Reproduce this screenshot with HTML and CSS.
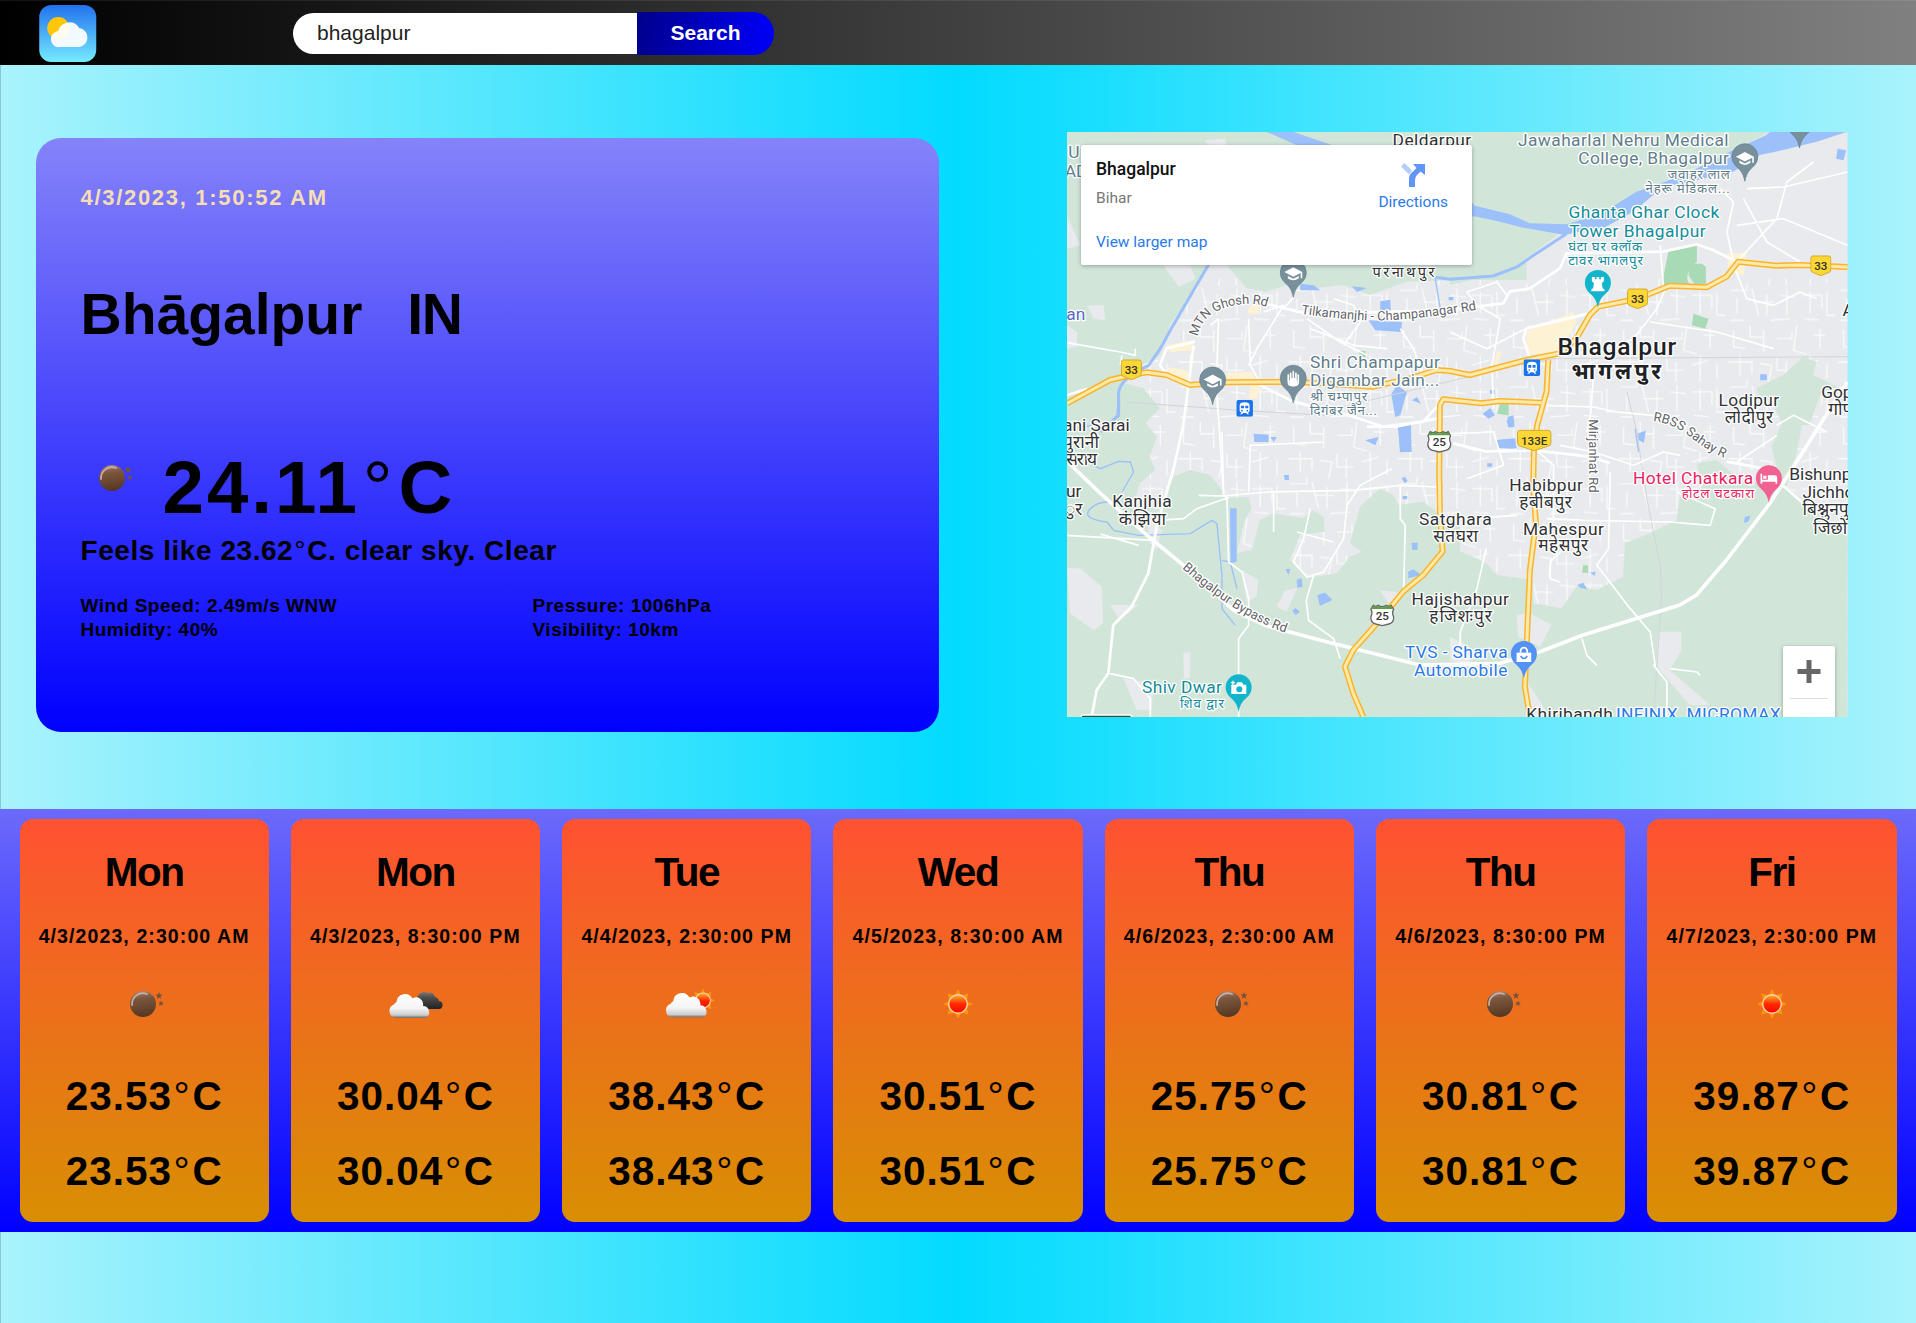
FILE: index.html
```html
<!DOCTYPE html>
<html lang="en">
<head>
<meta charset="utf-8">
<title>Weather</title>
<link rel="stylesheet" href="styles.css">
</head>
<body>
<svg class="defs" aria-hidden="true">
  <defs>
    <linearGradient id="sky" x1="0" y1="0" x2="0" y2="1"><stop offset="0" stop-color="#2172ee"/><stop offset="1" stop-color="#76ebff"/></linearGradient>
    <linearGradient id="moonFill" x1=".25" y1="0" x2=".4" y2="1"><stop offset="0" stop-color="#a98a78"/><stop offset=".3" stop-color="#7d573f"/><stop offset="1" stop-color="#553721"/></linearGradient>
    <linearGradient id="cloudFill" x1="0" y1="0" x2="0" y2="1"><stop offset="0" stop-color="#fff"/><stop offset=".6" stop-color="#f4f4f4"/><stop offset=".88" stop-color="#ccc"/><stop offset="1" stop-color="#666"/></linearGradient>
    <linearGradient id="darkFill" x1="0" y1="0" x2="0" y2="1"><stop offset="0" stop-color="#777"/><stop offset=".35" stop-color="#4a4a4a"/><stop offset="1" stop-color="#222"/></linearGradient>
    <linearGradient id="sunFill" x1="0" y1="0" x2="0" y2="1"><stop offset="0" stop-color="#ffb52e"/><stop offset=".5" stop-color="#ff2a00"/><stop offset="1" stop-color="#f00"/></linearGradient>
    <symbol id="moon" viewBox="-30 -30 60 60">
      <circle cx="-1" cy="0" r="13" fill="url(#moonFill)"/>
      <path d="M-12 1A11 11 0 0 1 3-10" fill="none" stroke="#d6bcae" stroke-width="1.8" stroke-linecap="round" opacity=".85"/>
      <path d="M15-12l1 2.400 2.500.2-1.900 1.700.6 2.500-2.200-1.300-2.200 1.300.6-2.500-1.900-1.700 2.500-.2zM17-3.500l.8 1.900 2 .2-1.500 1.300.5 2-1.800-1.100-1.800 1.100.5-2-1.500-1.300 2-.2z" fill="#75523c"/>
    </symbol>
    <symbol id="sun" viewBox="-30 -30 60 60">
      <path d="M0-15l3 6.500 7.600-2.100-2.100 7.600L15 0l-6.500 3 2.100 7.600L3 8.500 0 15l-3-6.500-7.600 2.100 2.100-7.600L-15 0l6.500-3-2.100-7.600L-3-8.500z" fill="#ff960c"/>
      <circle r="9.300" fill="url(#sunFill)" stroke="#ffd2a0" stroke-width="1.400"/>
    </symbol>
    <symbol id="cloud" viewBox="0 0 44 25"><path d="M7 25a7 7 0 0 1-1.500-13.500A6 6 0 0 1 8 9a8.500 8.500 0 0 1 16-3.500A7 7 0 0 1 34.500 13 6.300 6.300 0 0 1 37 25z" fill="url(#cloudFill)"/></symbol>
    <symbol id="clouds" viewBox="-30 -30 60 60">
      <path d="M2 5V-4A7.500 7.500 0 0 1 13-11a5 5 0 0 1 7 4 5 5 0 0 1 4 4 4 4 0 0 1-1 8z" fill="url(#darkFill)"/>
      <use href="#cloud" x="-26.500" y="-11" width="44" height="25"/>
    </symbol>
    <symbol id="partly" viewBox="-30 -30 60 60">
      <use href="#sun" x="-8" y="-27.500" width="48" height="48"/>
      <use href="#cloud" x="-22" y="-12" width="45" height="25.500"/>
    </symbol>
    <symbol id="pin" viewBox="-40 -40 80 116" overflow="visible"><path d="M0 74C-5 48-14 40-29 26A39 39 0 1 1 29 26C14 40 5 48 0 74z"/></symbol>
    <symbol id="cap" viewBox="-30 -25 60 50"><path d="M-28-4L0-19 28-4v19h-5V-1L0 11zM-17 8L0 17 17 8v8Q0 27-17 16z" fill="#fff"/></symbol>
    <symbol id="train" viewBox="-25 -25 50 50"><rect x="-25" y="-25" width="50" height="50" rx="6" fill="#1a73e8"/><path d="M-15-8q0-10 15-10t15 10V7q0 5-6 6l5 5H8L4 14H-4L-8 18h-6l5-5q-6-1-6-6zM-11-8V0H-2V-8zM2-8V0h9V-8z" fill="#fff" fill-rule="evenodd"/><circle cx="-8" cy="7" r="2.500" fill="#1a73e8"/><circle cx="8" cy="7" r="2.500" fill="#1a73e8"/></symbol>
    <symbol id="nh33" viewBox="-32 -32 64 64"><path d="M-24-29H24Q30-29 30-22V12Q30 19 22 21L0 30-22 21Q-30 19-30 12V-22Q-30-29-24-29z" fill="#fdd835" stroke="#d6a92c" stroke-width="3"/><text class="shield" y="12">33</text></symbol>
    <symbol id="nh25" viewBox="-38 -34 76 68"><path d="M-27-30Q-18-24-12-30 0-22 12-30 18-24 27-30L34-18Q28-8 34 4 36 22 20 26L0 31-20 26Q-36 22-34 4-28-8-34-18z" fill="#fff" stroke="#666" stroke-width="4"/><path d="M-27-28Q-18-22-12-28 0-20 12-28 18-22 27-28l5 9H-32z" fill="#5c9f42"/><text class="shield" y="13">25</text></symbol>
    <pattern id="streets" width="330" height="290" patternUnits="userSpaceOnUse">
      <path d="M20 15v50l35 4M70 0v35h40M110 15v65M150 40h45v-20M210 0l-10 75 40 12M260 30h35M280 10v60M5 110h70v35M40 90v60M100 115l35 5-10 50M150 95v40h50M178 110v60M225 120l50-15M250 90v80M300 115v45M10 185h50v-20M30 210v45M75 180l20 80M80 220h60M120 195v65M160 200l45 5M180 180v80M225 200h60v40M250 190v65M300 190v70h25M10 275h40M130 275l60-5M230 270l45 4" fill="none" stroke="#fff" stroke-width="4"/>
    </pattern>
    <path id="ghosh" d="M392 614Q405 548 475 527T595 523"/>
    <path id="tilka" d="M702 545Q760 555 880 564T1260 528"/>
    <path id="bypassLabel" d="M345 1309Q510 1455 665 1505"/>
    <path id="sahay" d="M1758 867Q1820 874 1870 915T1980 981"/>
  </defs>
</svg>

<header class="nav">
  <svg class="logo" viewBox="0 0 57 57" role="img" aria-label="Weather">
    <rect width="57" height="57" rx="12" fill="url(#sky)"/>
    <circle cx="19" cy="23" r="11" fill="#ffc60a"/>
    <path d="M21 42a8 8 0 0 1-6.500-14A10 10 0 0 1 19 26a11.500 11.500 0 0 1 21-3 9.600 9.600 0 0 1 0 19z" fill="#fff" opacity=".93"/>
  </svg>
  <form class="search">
    <input class="search-input" type="text" value="bhagalpur" aria-label="City">
    <button class="search-button" type="button">Search</button>
  </form>
</header>

<main class="overview">
  <section class="current">
    <p class="current-date">4/3/2023, 1:50:52 AM</p>
    <h1 class="place"><span class="city">Bhāgalpur</span><span class="country">IN</span></h1>
    <div class="current-temp"><svg class="icon"><use href="#moon"/></svg><span>24.11<span class="deg">°</span>C</span></div>
    <p class="feels">Feels like 23.62<span class="deg">°</span>C. clear sky. Clear</p>
    <div class="details">
      <div>Wind Speed: 2.49m/s WNW</div><div class="tight">Pressure: 1006hPa</div>
      <div class="tight">Humidity: 40%</div><div class="tight">Visibility: 10km</div>
    </div>
  </section>

  <section class="map">
    <svg class="map-canvas" viewBox="0 0 2342 1755" preserveAspectRatio="none">
      <rect width="2342" height="1755" fill="#e8eaed"/>
      <rect y="440" width="2342" height="1315" fill="url(#streets)" opacity=".75"/>
      <g class="green">
        <g transform="translate(-21 -21)">
          <path d="M21 21H1400V465H1200L1040 470 930 510 850 480 760 490 680 480 620 500 560 490 500 420H445L400 500 330 600 300 690 250 720 190 780 21 880z"/>
          <path d="M21 840L180 770 250 790 300 850 250 900H21z"/>
        </g>
        <g transform="translate(1149 -21)">
          <path d="M0 21H960L850 75 640 170 450 268 350 310 200 420 130 450 0 480z"/>
          <path d="M920 790L1000 750 1060 695 1100 710 1090 750 1193 800V830L1110 810 1080 900H1000L970 840 925 805z"/>
        </g>
        <g transform="translate(-21 864)">
          <path d="M21 0H250L290 50 270 110 285 150 240 190 220 250 300 270 340 170 390 150 450 165 490 215 500 235 565 230 575 265 555 300 530 400 575 390 600 300 640 280 730 295 760 270 790 290 795 335 720 345 690 420 740 475 830 460 870 410 905 395 870 370 900 260 960 205 1000 225 1015 255 1090 245 1130 275 1200 300V900H21z"/>
        </g>
        <g transform="translate(1149 864)">
          <path d="M0 380L110 430 140 465 250 480 250 550 335 565 380 500 440 510 520 470 525 370 600 340 680 300 690 230 760 200 740 130 800 120 860 170 900 200 980 140 965 80 1000 0H1060L1040 100 1010 200 1080 260 1193 350V900H0z"/>
        </g>
      </g>
      <g class="urban">
        <path d="M289 400H370L385 440 335 465zM415 25L475 20 480 40 420 38zM0 250L40 340 0 350zM60 520L110 520 115 565 80 560zM0 580L30 600 30 645 0 650z"/>
        <g transform="translate(-21 864)"><path d="M21 445H60L125 500 130 610 100 630 30 580zM150 555H235L180 600zM545 450L595 480 590 530 560 545zM650 560L675 510 712 505 680 575zM370 700L390 695V775H372zM190 775L280 790 275 870 230 870zM960 510L1030 520 1000 570zM260 290L305 330 290 390 270 370z"/></g>
        <g transform="translate(1149 864)"><path d="M200 585L240 580 305 615 270 680 205 650zM625 635H695V690L660 750 780 855H720L620 740zM235 790L300 891H240zM0 650L60 680V740L0 720z"/></g>
      </g>
      <g class="commercial"><path d="M1379 599L1519 539 1529 569 1479 659 1379 669zM1979 364H2040L2030 430 1985 415zM299 640L375 625 379 655 310 660zM300 705L360 715 370 745 310 735zM480 722L560 720V750H480zM550 520H575V545H540zM1290 659H1305L1290 700H1280zM550 760H580L570 800H545z"/></g>
      <g class="park"><path d="M1805 355L1890 340V390L1875 400Q1850 440 1870 460H1785zM1870 395H1905L1917 405V455L1885 460 1865 430zM1880 545L1925 560 1915 590 1875 580zM1300 814H1325V850L1290 845zM1549 1300H1563V1322H1546zM876 657H896V675H876z"/></g>
      <g class="water">
        <path transform="translate(1149 -21)" d="M66 240L180 268 240 295 350 298 450 268 560 200 700 150 850 75 950 30 960 21H1190L1100 50 1000 75 930 90 850 140 700 175 640 185 550 260 460 310 380 322 345 330 220 308 150 290 66 272z"/>
        <path d="M600 0H680Q960 90 1220 215V255Q950 120 780 80zM700 455L740 460 760 475 700 475zM855 463L900 468 870 480zM940 508L970 503 972 540 940 535zM905 565L1005 570 1003 600 925 595zM1145 495H1159V505H1145zM2312 50L2338 55 2330 85 2308 80z"/>
        <path d="M973 786L990 760 1020 780 1000 850 985 855zM993 881L1030 878 1033 960 1000 960zM1035 805L1050 795 1062 815zM895 925L935 915 925 940zM1247 845L1270 828 1284 850 1265 860zM1290 925L1345 920V950L1295 948zM1322 855L1340 850V880L1325 885zM1268 775H1283V785H1270zM2080 727H2100V745H2080zM560 905L605 908V930H562zM610 915H630L620 930z"/>
        <g transform="translate(-21 864)"><path d="M510 265H530V425L512 430zM1015 20L1053 15 1055 95 1020 97zM1055 368H1073V390H1057zM1045 455L1060 448 1085 465 1045 475zM772 525L795 518 818 540 780 558zM710 480L725 474 728 500 712 503zM697 572L707 564 720 575 707 585zM677 447H692L685 465zM672 165H687V180H674zM1025 175L1035 170 1043 182 1035 190zM1027 228H1042V238H1029z"/></g>
        <g transform="translate(1149 864)"><path d="M140 60L195 55 200 85 143 83zM170 0H193V22H175zM565 40L588 32 582 68 565 60zM885 290L902 288 895 305 882 308zM382 495L400 488 412 508 390 503zM112 130H127V140H112zM420 458L438 455 434 467z"/></g>
      </g>
      <g class="stream">
        <path d="M1499 305L1400 370 1350 405 1279 432 1149 442 1100 435" stroke-width="9"/>
        <path d="M428 392L310 595 280 650 245 700Q160 740 155 780L155 850 100 900" stroke-width="9"/>
        <path d="M155 780L150 850 130 870 50 885M60 990L100 1010 155 988 190 990 200 1020 165 1080M160 1115Q100 1100 70 1130T120 1170L140 1195 215 1210 370 1205 435 1165 450 1175 465 1330V1430L505 1480M465 1285L490 1290 510 1370M1105 440L1120 530M1705 890L1715 960"/>
      </g>
      <g class="rail"><path d="M180 810L520 835 780 850M780 835L1350 700 1460 680 2342 674M1680 780L1710 900 1740 1100 1780 1300 1784 1400 1760 1755"/></g>
      <g class="minor">
        <path d="M0 632L160 660 205 670V650M165 670L160 700M430 580L455 560 448 750 470 1090 485 1100M545 560L550 700 590 770M590 540L650 520 570 650 545 700M650 530L680 495M960 650L860 640 730 590M800 500L860 520 880 570 830 640M720 560L820 630 900 670M1000 590L1040 650 1080 770"/>
        <path d="M395 1090L470 1092 600 1080 860 1075 1000 1060 1110 1065M270 1165L350 1160 390 1130 480 1098 485 1290 525 1320 545 1400 545 1480 515 1520V1755M730 1130L710 1220 680 1290 720 1335 770 1320 830 1220 840 1120 880 1060 975 1010M740 1330L718 1405 725 1465 800 1520 820 1580M1000 1060V1160L1015 1180 1010 1380M690 1200L800 1230M470 1090L465 900M545 1080L550 940 770 930M0 1210L260 1225M215 1240L100 1206M130 1625L200 1640 250 1700V1755M1350 1150L1200 1160 1149 1160M620 1080V1200"/>
        <path d="M1280 830L1275 700 1300 560 1230 520 1200 480 1290 450 1320 490M1379 589L1260 650 1149 600M1600 660L1700 620 1770 530 1800 460M1780 340L1790 470M2000 390L1980 300 2000 210 1960 170M2010 280L2150 260 2342 340M2000 400L2130 260 2160 150 2240 90M2040 170L2150 165 2342 120M2030 200L2100 330 2200 390M2000 400L2040 500 2120 520 2200 480 2250 500M1750 570L1950 600 2120 650M1440 820L1579 825 1650 840 1760 850M1579 740L1572 840 1560 900M1149 905L1280 900 1310 1000 1200 1040M1480 940L1580 960 1700 1000 1790 960 1840 970M1440 1160L1550 1165 1810 1170 1930 1180 1945 1130 1830 1080M1630 1020L1625 1250 1590 1300 1690 1430 1750 1500 1765 1600 1760 1600 1800 1650V1755M1258 1250L1230 1370 1180 1500V1560M1810 1610L1890 1620 1900 1630M1545 1520L1560 1570 1590 1600M1300 960L1410 955 1460 1000V1170M2010 990L2130 910M2130 880L2180 850 2280 900M1480 1350L1450 1340V1290L1500 1240"/>
      </g>
      <g class="roads">
        <path d="M0 988L99 1083 239 1209 379 1324 499 1434 600 1482 779 1529 1059 1599 1299 1594 1419 1559 1549 1509 1839 1419 1889 1389 1979 1284 2109 1114 2199 974 2280 845 2342 750" stroke-width="11"/>
        <path d="M384 629L299 649 279 699 299 729M380 640L349 879 319 1014 269 1184 244 1324 194 1424 139 1479 124 1624 89 1674 74 1755M589 514L720 545 1149 535 1229 524 1309 514 1329 479 1389 469 1479 409 1499 364 1789 359 1889 337 1939 354 2009 389M1379 589L1589 539M1379 589L1369 619 1389 679M579 759L679 809 859 854 949 884 1069 869 1119 814M1159 934L1259 959 1349 954M1400 955L1569 974 1629 994M1979 989L2089 1009 2209 1114 2250 1150M900 884L985 884 1110 860M0 790L60 770"/>
      </g>
      <g class="highway-edge"><path d="M0 814L129 744 194 729 239 721 299 729 369 759 479 751 679 749 919 764 1029 739 1109 714 1149 717 1209 729 1379 684 1479 664 1529 619 1569 549 1594 524 1709 501 1809 461 1919 466 1979 434 2014 389 2129 401 2199 399 2342 405M1444 684L1439 779 1411 879 1401 954 1399 1064 1407 1174 1389 1314 1374 1664 1389 1755M1424 812L1299 807 1244 814 1129 802 1119 819 1117 1024 1119 1139 1127 1259 1069 1329 1009 1379 939 1464 859 1554 834 1604 859 1684 889 1755"/></g>
      <g class="highway"><path d="M0 814L129 744 194 729 239 721 299 729 369 759 479 751 679 749 919 764 1029 739 1109 714 1149 717 1209 729 1379 684 1479 664 1529 619 1569 549 1594 524 1709 501 1809 461 1919 466 1979 434 2014 389 2129 401 2199 399 2342 405M1444 684L1439 779 1411 879 1401 954 1399 1064 1407 1174 1389 1314 1374 1664 1389 1755M1424 812L1299 807 1244 814 1129 802 1119 819 1117 1024 1119 1139 1127 1259 1069 1329 1009 1379 939 1464 859 1554 834 1604 859 1684 889 1755"/></g>

      <use href="#nh33" x="161" y="681" width="64" height="64"/>
      <use href="#nh33" x="1680" y="468" width="64" height="64"/>
      <use href="#nh33" x="2230" y="369" width="64" height="64"/>
      <use href="#nh25" x="1079" y="895" width="76" height="68"/>
      <use href="#nh25" x="908" y="1416" width="76" height="68"/>
      <path d="M1360 895H1444Q1452 895 1452 903V933Q1452 941 1442 943L1402 956 1362 943Q1352 941 1352 933V903Q1352 895 1360 895z" fill="#fdd835" stroke="#d6a92c" stroke-width="3"/>
      <text class="shield" x="1402" y="940">133E</text>

      <g class="label road">
        <text textLength="254"><textPath href="#ghosh">MTN Ghosh Rd</textPath></text>
        <text><textPath href="#tilka" textLength="530">Tilkamanjhi - Champanagar Rd</textPath></text>
        <text><textPath href="#bypassLabel">Bhagalpur Bypass Rd</textPath></text>
        <text><textPath href="#sahay">RBSS Sahay Rd</textPath></text>
        <text transform="translate(1566 862) rotate(90)" textLength="220">Mirjanhat Rd</text>
      </g>
      <g class="label town">
        <text x="977" y="42" textLength="236">Deldarpur</text>
        <text x="917" y="434" font-size="44" textLength="186">परनाथपुर</text>
        <text x="-12" y="897" textLength="200">ani Sarai</text>
        <text x="-12" y="948" textLength="108">पुरानी</text>
        <text x="-2" y="1000" textLength="92">सराय</text>
        <text x="-3" y="1095">ur</text><text x="-6" y="1148">ुर</text>
        <text x="136" y="1124" textLength="178">Kanjhia</text>
        <text x="155" y="1178" textLength="142">कंझिया</text>
        <text x="1056" y="1178" textLength="218">Satghara</text>
        <text x="1099" y="1229" textLength="134">सतघरा</text>
        <text x="1327" y="1078" textLength="221">Habibpur</text>
        <text x="1357" y="1128" textLength="158">हबीबपुर</text>
        <text x="1368" y="1208" textLength="243">Mahespur</text>
        <text x="1414" y="1258" textLength="150">महेसपुर</text>
        <text x="1034" y="1420" textLength="292">Hajishahpur</text>
        <text x="1087" y="1471" textLength="188">हजिशःपुर</text>
        <text x="1955" y="823" textLength="182">Lodipur</text>
        <text x="1974" y="872" textLength="145">लोदीपुर</text>
        <text x="2263" y="799">Gopalpur</text><text x="2284" y="850">गोपालपुर</text>
        <text x="2327" y="553">Ali</text>
        <text x="2167" y="1043">Bishunpur</text><text x="2207" y="1097">Jichho</text>
        <text x="2207" y="1148">बिश्नुनपुर</text><text x="2239" y="1206">जिछो</text>
        <text x="1378" y="1764" textLength="260">Khiribandh</text>
        <text class="capital" x="1472" y="669" textLength="356">Bhagalpur</text>
        <text class="capital hindi" x="1514" y="741" textLength="268">भागलपुर</text>
      </g>
      <g class="label place-gray">
        <text x="4" y="79">U</text><text x="-7" y="135">AD</text>
        <text x="1353" y="42" textLength="632">Jawaharlal Nehru Medical</text>
        <text x="1534" y="97" textLength="452">College, Bhagalpur</text>
        <text class="small" x="1802" y="142" textLength="187">जवाहर लाल</text>
        <text class="small" x="1736" y="184" textLength="253">नेहरू मेडिकल...</text>
        <text x="729" y="707" textLength="390">Shri Champapur</text>
        <text x="729" y="762" textLength="388">Digambar Jain...</text>
        <text class="small" x="729" y="806" textLength="172">श्री चम्पापुर</text>
        <text class="small" x="729" y="848" textLength="201">दिगंबर जैन...</text>
      </g>
      <g class="label place-teal">
        <text x="1505" y="259" textLength="452">Ghanta Ghar Clock</text>
        <text x="1507" y="314" textLength="409">Tower Bhagalpur</text>
        <text class="small" x="1504" y="357" textLength="222">घंटा घर क्लॉक</text>
        <text class="small" x="1504" y="400" textLength="224">टावर भागलपुर</text>
        <text x="225" y="1683" textLength="240">Shiv Dwar</text>
        <text class="small" x="339" y="1728" textLength="132">शिव द्वार</text>
      </g>
      <g class="label place-pink">
        <text x="1698" y="1055" textLength="361">Hotel Chatkara</text>
        <text class="small" x="1845" y="1098" textLength="217">होटल चटकारा</text>
      </g>
      <g class="label place-blue">
        <text x="1014" y="1578" textLength="308">TVS - Sharva</text>
        <text x="1041" y="1633" textLength="281">Automobile</text>
        <text x="1647" y="1765" textLength="494">INFINIX, MICROMAX</text>
      </g>
      <text class="label place-purple" x="-2" y="565">an</text>

      <g fill="#78909c" stroke="#607d8b" stroke-width="2">
        <use href="#pin" x="639" y="382" width="80" height="116"/>
        <use href="#pin" x="397" y="704" width="80" height="116"/>
        <use href="#pin" x="639" y="699" width="80" height="116"/>
        <use href="#pin" x="1994" y="34" width="80" height="116"/>
        <use href="#pin" x="2158" y="-66" width="80" height="116"/>
      </g>
      <use href="#pin" x="1553" y="413" width="80" height="116" fill="#12b5cb"/>
      <use href="#pin" x="475" y="1626" width="80" height="116" fill="#12b5cb"/>
      <use href="#pin" x="2066" y="999" width="80" height="116" fill="#f06292"/>
      <use href="#pin" x="1331" y="1526" width="80" height="116" fill="#5491f5"/>
      <use href="#cap" x="650" y="400" width="58" height="48"/>
      <use href="#cap" x="408" y="722" width="58" height="48"/>
      <use href="#cap" x="2005" y="54" width="58" height="48"/>
      <g transform="translate(679 741)" fill="none" stroke="#fff" stroke-width="5" stroke-linecap="round"><path d="M-15-12V8Q-15 20 0 20T15 8V-12M-8-17V0M0-22V-2M8-17V0"/><circle cy="9" r="10" fill="#fff"/></g>
      <path transform="translate(1593 457)" d="M-18-22h9v7h5v-7h8v7h5v-7h9v13l-6 5 2 15 6 5v5H-20v-5l6-5 2-15-6-5z" fill="#fff"/>
      <g transform="translate(515 1668)"><path d="M-22-10H-8l4-7H10l4 7h9V18H-22z" fill="#fff"/><circle cx="2" cy="4" r="9" fill="#12b5cb"/><path d="M-17-22v12M-23-16h12" stroke="#fff" stroke-width="4"/></g>
      <path transform="translate(2106 1040)" d="M-25-15h5V3H-3v-13H18q7 0 7 7v18h-5V9H-20v6h-5zM-17-9h10v9h-10z" fill="#fff"/>
      <g transform="translate(1371 1569)"><path d="M-22-7H22V21H-22z" fill="#fff"/><path d="M-10-7v-5a10 10 0 0 1 20 0v5" fill="none" stroke="#fff" stroke-width="5"/><path d="M-10 3Q0 18 10 3" fill="none" stroke="#5491f5" stroke-width="5"/></g>
      <use href="#train" x="508" y="804" width="50" height="50"/>
      <use href="#train" x="1370" y="682" width="50" height="50"/>
      <rect x="42" y="1749" width="152" height="30" rx="6" fill="#3c4a38" stroke="#fff" stroke-width="5"/>
    </svg>
    <div class="map-info">
      <div class="map-text">
        <strong>Bhagalpur</strong>
        <span class="region">Bihar</span>
        <a class="larger">View larger map</a>
      </div>
      <div class="directions">
        <svg viewBox="0 0 24 24"><path d="M0 3.500L3.500 0 11 7.500 8 11.500z" fill="#b4cdfb"/><path d="M8 24V16Q8 11 12 8.500L15.500 5 12 1H24V12L19.500 8.500 16 12Q14 14 14 17v7z" fill="#6295f8"/></svg>
        <span>Directions</span>
      </div>
    </div>
    <div class="map-zoom"><svg viewBox="0 0 24 24"><path d="M12 0v23M.5 11.500h23" stroke="#666" stroke-width="5"/></svg></div>
  </section>
</main>

<section class="forecast">
  <article class="day"><h2>Mon</h2><time>4/3/2023, 2:30:00 AM</time><svg class="icon"><use href="#moon"/></svg><p>23.53<span class="deg">°</span>C</p><p>23.53<span class="deg">°</span>C</p></article>
  <article class="day"><h2>Mon</h2><time>4/3/2023, 8:30:00 PM</time><svg class="icon"><use href="#clouds"/></svg><p>30.04<span class="deg">°</span>C</p><p>30.04<span class="deg">°</span>C</p></article>
  <article class="day"><h2>Tue</h2><time>4/4/2023, 2:30:00 PM</time><svg class="icon"><use href="#partly"/></svg><p>38.43<span class="deg">°</span>C</p><p>38.43<span class="deg">°</span>C</p></article>
  <article class="day"><h2>Wed</h2><time>4/5/2023, 8:30:00 AM</time><svg class="icon"><use href="#sun"/></svg><p>30.51<span class="deg">°</span>C</p><p>30.51<span class="deg">°</span>C</p></article>
  <article class="day"><h2>Thu</h2><time>4/6/2023, 2:30:00 AM</time><svg class="icon"><use href="#moon"/></svg><p>25.75<span class="deg">°</span>C</p><p>25.75<span class="deg">°</span>C</p></article>
  <article class="day"><h2>Thu</h2><time>4/6/2023, 8:30:00 PM</time><svg class="icon"><use href="#moon"/></svg><p>30.81<span class="deg">°</span>C</p><p>30.81<span class="deg">°</span>C</p></article>
  <article class="day"><h2>Fri</h2><time>4/7/2023, 2:30:00 PM</time><svg class="icon"><use href="#sun"/></svg><p>39.87<span class="deg">°</span>C</p><p>39.87<span class="deg">°</span>C</p></article>
</section>
</body>
</html>
```
FILE: styles.css
```css
* { box-sizing: border-box; }
body {
  margin: 0;
  min-height: 1323px;
  font-family: "Liberation Sans", Arial, sans-serif;
  font-weight: 700;
  color: #000;
  background: linear-gradient(90deg, #a9f3fc, #02dbff 50%, #a9f3fc);
  box-shadow: inset 1px 0 rgba(0, 0, 0, .18);
}
p, h1, h2 { margin: 0; font-weight: 700; }
.defs { display: block; width: 0; height: 0; }

.nav {
  display: flex;
  align-items: center;
  height: 65px;
  padding-left: 39px;
  background: linear-gradient(90deg, #000, #808080);
  border-top: 1px solid rgba(255, 255, 255, .08);
  background-clip: border-box;
}
.logo { width: 57.500px; height: 57px; }
.search { display: flex; align-items: center; margin-left: 196.500px; }
.search-input {
  width: 344px; height: 41px;
  padding: 0 0 0 24px;
  border: 0; border-radius: 21px 0 0 21px;
  background: #fff; color: #222;
  font: 400 21px "Liberation Sans", Arial, sans-serif;
}
.search-button {
  width: 137px; height: 43px;
  padding: 0;
  border: 0; border-radius: 0 21px 21px 0;
  background: linear-gradient(100deg, #00008b, #0000f0 90%);
  color: #fff;
  font: 700 21px "Liberation Sans", Arial, sans-serif;
}

.overview { display: flex; height: 744px; padding: 67px 0 0 35.500px; }
.current {
  width: 903px; height: 600px;
  margin-top: 6px;
  height: 594px;
  padding: 48px 45px 0;
  border-radius: 25px;
  background: linear-gradient(#8583f9, #0000ff);
}
.current-date { font-size: 22px; line-height: 24px; letter-spacing: 1.700px; color: #f5deb3; }
.place { display: flex; margin-top: 72px; font-size: 57px; line-height: 64px; }
.country { margin-left: 45px; letter-spacing: -1.500px; }
.current-temp { display: flex; align-items: center; margin-top: 101.500px; font-size: 74.500px; line-height: 80px; letter-spacing: 3px; }
.current-temp .icon { margin: -20px 20px 0 2px; }
.icon { width: 60px; height: 60px; flex: none; overflow: visible; }
.deg { font-weight: 400; margin: 0 .04em; }
.feels { margin-top: 6px; font-size: 28px; line-height: 34px; letter-spacing: .550px; }
.details { display: grid; grid-template-columns: 452px 1fr; margin-top: 26px; font-size: 19px; line-height: 24.300px; letter-spacing: .520px; }

.map { position: relative; width: 780.500px; height: 585px; margin-left: 128.500px; overflow: hidden; }
.map-canvas { display: block; width: 100%; height: 100%; font-family: Roboto, "Noto Sans", sans-serif; font-weight: 400; }
.green { fill: #d1e6d9; }
.urban { fill: #e8eaed; }
.commercial { fill: #fdf3d4; }
.park { fill: #a8dab5; }
.water { fill: #9cc0f9; }
.stream { fill: none; stroke: #9cc0f9; stroke-width: 4; }
.rail { fill: none; stroke: #d2d5d8; stroke-width: 3; }
.minor { fill: none; stroke: #fff; stroke-width: 5; stroke-linejoin: round; }
.roads { fill: none; stroke: #fff; stroke-width: 8; stroke-linejoin: round; }
.highway-edge { fill: none; stroke: #f9b42c; stroke-width: 18; stroke-linejoin: round; }
.highway { fill: none; stroke: #ffe9a8; stroke-width: 9; stroke-linejoin: round; }
.label { font-size: 52px; stroke: #fff; stroke-width: 8px; stroke-linejoin: round; paint-order: stroke; fill: #303134; }
.road { font-size: 39px; fill: #5f6368; }
.small { font-size: 40px; }
.capital { font-size: 74px; font-weight: 500; fill: #202124; }
.hindi { font-size: 66px; font-weight: 700; }
.place-gray { fill: #607d8b; }
.place-teal { fill: #128c99; }
.place-pink { fill: #e91e63; }
.place-blue { fill: #2a78e8; }
.place-purple { fill: #5b68c8; }
.shield { font-size: 35px; font-weight: 500; fill: #333; stroke: none; text-anchor: middle; }

.map-info {
  position: absolute; left: 13.500px; top: 13px;
  display: flex; justify-content: space-between;
  width: 391.500px; height: 120px;
  padding: 12px 24px 0 15.500px;
  border-radius: 2px;
  background: #fff;
  box-shadow: 0 1px 4px rgba(0, 0, 0, .3);
  font: 400 15.500px/20px Roboto, sans-serif;
  color: #777;
}
.map-text { display: flex; flex-direction: column; }
.map-text strong { font-size: 17.500px; line-height: 24px; font-weight: 500; color: #111; }
.region { margin-top: 7px; }
.larger, .directions { color: #2a7ae9; }
.larger { margin-top: 24px; }
.directions { display: flex; flex-direction: column; align-items: center; padding-top: 5.500px; }
.directions svg { width: 24px; height: 24px; margin-bottom: 5px; }
.map-zoom {
  position: absolute; left: 715.500px; top: 514px;
  width: 52px; height: 90px;
  padding: 14px 7px;
  border-radius: 2px;
  background: #fff;
  box-shadow: 0 1px 4px rgba(0, 0, 0, .3);
}
.map-zoom svg { display: block; width: 24px; height: 24px; margin: 0 auto 14px; }
.map-zoom::after { content: ""; display: block; height: 1px; background: #ddd; }

.forecast {
  display: grid; grid-template-columns: repeat(7, 1fr); gap: 22px;
  height: 423px;
  padding: 10px 19.500px;
  background: linear-gradient(#6c6afb, #0000ff);
}
.day {
  display: flex; flex-direction: column; align-items: center;
  padding-top: 29px;
  border-radius: 13px;
  background: linear-gradient(#ff5231, #d88f03);
}
.day h2 { font-size: 40.500px; line-height: 48px; letter-spacing: -1.500px; }
.day time { margin-top: 27.500px; font-size: 19.500px; line-height: 24px; letter-spacing: 1.100px; white-space: nowrap; }
.day .icon { margin-top: 26.500px; }
.day p { margin-top: 38px; font-size: 40.500px; line-height: 48px; letter-spacing: 1px; }
.day p + p { margin-top: 27px; }
```
